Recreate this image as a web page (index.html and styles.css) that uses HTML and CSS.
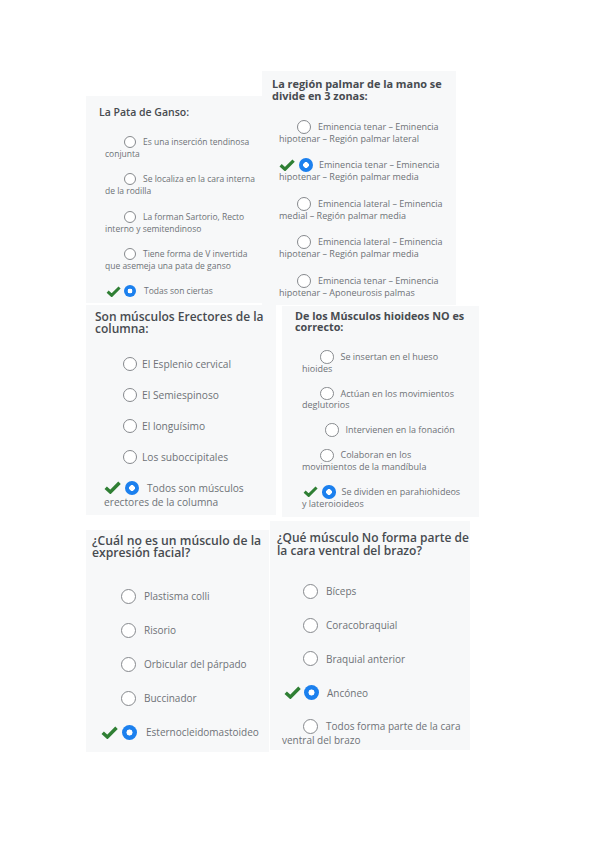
FILE: index.html
```html
<!DOCTYPE html>
<html lang="es">
<head>
<meta charset="utf-8">
<title>Cuestionario de anatomía</title>
<link rel="stylesheet" href="styles.css">
</head>
<body>
<main class="page">
  <div class="row row-1">
    <section class="card q1">
      <h2 class="title">La Pata de Ganso:</h2>
      <div class="opts">
        <p class="opt"><span class="lead"></span><span class="radio"></span>Es una inserción tendinosa<br>conjunta</p>
        <p class="opt"><span class="lead"></span><span class="radio"></span>Se localiza en la cara interna<br>de la rodilla</p>
        <p class="opt"><span class="lead"></span><span class="radio"></span>La forman Sartorio, Recto<br>interno y semitendinoso</p>
        <p class="opt"><span class="lead"></span><span class="radio"></span>Tiene forma de V invertida<br>que asemeja una pata de ganso</p>
        <p class="opt"><span class="lead on"><svg class="check" viewBox="0 0 16 12"><path d="M1.6 6.2 L6 10.2 L14.6 1.6"/></svg></span><span class="radio checked"></span>Todas son ciertas</p>
      </div>
    </section>
    <section class="card q2">
      <h2 class="title">La región palmar de la mano se<br>divide en 3 zonas:</h2>
      <div class="opts">
        <p class="opt"><span class="lead"></span><span class="radio"></span>Eminencia tenar – Eminencia<br>hipotenar – Región palmar lateral</p>
        <p class="opt"><span class="lead on"><svg class="check" viewBox="0 0 16 12"><path d="M1.6 6.2 L6 10.2 L14.6 1.6"/></svg></span><span class="radio checked"></span>Eminencia tenar – Eminencia<br>hipotenar – Región palmar media</p>
        <p class="opt"><span class="lead"></span><span class="radio"></span>Eminencia lateral – Eminencia<br>medial – Región palmar media</p>
        <p class="opt"><span class="lead"></span><span class="radio"></span>Eminencia lateral – Eminencia<br>hipotenar – Región palmar media</p>
        <p class="opt"><span class="lead"></span><span class="radio"></span>Eminencia tenar – Eminencia<br>hipotenar – Aponeurosis palmas</p>
      </div>
    </section>
  </div>

  <div class="row row-2">
    <section class="card q3">
      <h2 class="title">Son músculos Erectores de la<br>columna:</h2>
      <div class="opts">
        <p class="opt"><span class="lead"></span><span class="radio"></span>El Esplenio cervical</p>
        <p class="opt"><span class="lead"></span><span class="radio"></span>El Semiespinoso</p>
        <p class="opt"><span class="lead"></span><span class="radio"></span>El longuísimo</p>
        <p class="opt"><span class="lead"></span><span class="radio"></span>Los suboccipitales</p>
        <p class="opt"><span class="lead on"><svg class="check" viewBox="0 0 16 12"><path d="M1.6 6.2 L6 10.2 L14.6 1.6"/></svg></span><span class="radio checked"></span>Todos son músculos<br>erectores de la columna</p>
      </div>
    </section>
    <section class="card q4">
      <h2 class="title">De los Músculos hioideos NO es<br>correcto:</h2>
      <div class="opts">
        <p class="opt"><span class="lead"></span><span class="radio"></span>Se insertan en el hueso<br>hioides</p>
        <p class="opt"><span class="lead"></span><span class="radio"></span>Actúan en los movimientos<br>deglutorios</p>
        <p class="opt"><span class="lead wide"></span><span class="radio"></span>Intervienen en la fonación</p>
        <p class="opt"><span class="lead"></span><span class="radio"></span>Colaboran en los<br>movimientos de la mandíbula</p>
        <p class="opt"><span class="lead on"><svg class="check" viewBox="0 0 16 12"><path d="M1.6 6.2 L6 10.2 L14.6 1.6"/></svg></span><span class="radio checked"></span>Se dividen en parahiohideos<br>y lateroioideos</p>
      </div>
    </section>
  </div>

  <div class="row row-3">
    <section class="card q5">
      <h2 class="title">¿Cuál no es un músculo de la<br>expresión facial?</h2>
      <div class="opts">
        <p class="opt"><span class="lead"></span><span class="radio"></span>Plastisma colli</p>
        <p class="opt"><span class="lead"></span><span class="radio"></span>Risorio</p>
        <p class="opt"><span class="lead"></span><span class="radio"></span>Orbicular del párpado</p>
        <p class="opt"><span class="lead"></span><span class="radio"></span>Buccinador</p>
        <p class="opt"><span class="lead on"><svg class="check" viewBox="0 0 16 12"><path d="M1.6 6.2 L6 10.2 L14.6 1.6"/></svg></span><span class="radio checked"></span>Esternocleidomastoideo</p>
      </div>
    </section>
    <section class="card q6">
      <h2 class="title">¿Qué músculo No forma parte de<br>la cara ventral del brazo?</h2>
      <div class="opts">
        <p class="opt"><span class="lead"></span><span class="radio"></span>Bíceps</p>
        <p class="opt"><span class="lead"></span><span class="radio"></span>Coracobraquial</p>
        <p class="opt"><span class="lead"></span><span class="radio"></span>Braquial anterior</p>
        <p class="opt"><span class="lead on"><svg class="check" viewBox="0 0 16 12"><path d="M1.6 6.2 L6 10.2 L14.6 1.6"/></svg></span><span class="radio checked"></span>Ancóneo</p>
        <p class="opt"><span class="lead"></span><span class="radio"></span>Todos forma parte de la cara<br>ventral del brazo</p>
      </div>
    </section>
  </div>
</main>
</body>
</html>
```

FILE: styles.css
```css
* { box-sizing: border-box; }

html, body {
  margin: 0;
  padding: 0;
  background: #ffffff;
}

body {
  width: 599px;
  height: 848px;
  overflow: hidden;
  font-family: "Open Sans", "Noto Sans", "DejaVu Sans", sans-serif;
}

.page {
  padding-top: 71px;
}

.row {
  display: flex;
  align-items: flex-start;
  padding-left: 86px;
}

.row-2 { gap: 6px; }
.row-3 { gap: 1px; margin-top: 3.5px; }

.card {
  background: #f7f8f9;
  padding-top: var(--pt);
  padding-bottom: var(--pb);
}

.title {
  margin: 0 0 var(--tg);
  padding-left: var(--tpl);
  font-size: var(--tfs);
  line-height: var(--tlh);
  font-weight: var(--tw, 600);
  color: #474b50;
  white-space: nowrap;
}

.opts {
  padding-left: var(--opl);
}

.opt {
  margin: 0;
  font-size: var(--fs);
  line-height: var(--lh);
  color: #6e7277;
  white-space: nowrap;
}

.opt + .opt {
  margin-top: var(--og);
}

.lead {
  display: inline-flex;
  align-items: center;
  width: var(--lead);
  height: var(--lh);
  vertical-align: top;
}

.lead.on {
  width: var(--leadc);
  padding-left: var(--ckoff, 0px);
}

.lead.wide {
  width: var(--leadw);
}

.check {
  width: var(--ckw);
  height: var(--ckh);
  flex: none;
}

.check path {
  fill: none;
  stroke: #2f7f34;
  stroke-width: 3.3;
  stroke-linejoin: miter;
}

.radio {
  display: inline-block;
  width: var(--rd);
  height: var(--rd);
  margin-top: calc((var(--lh) - var(--rd)) / 2);
  margin-bottom: calc((var(--lh) - var(--rd)) / 2);
  margin-right: var(--rg);
  border: 1.4px solid #86898d;
  border-radius: 50%;
  background: #ffffff;
  vertical-align: top;
}

.radio.checked {
  border: none;
  margin-right: var(--rgc, var(--rg));
  background: radial-gradient(circle, #ffffff 0 26%, #1c80ee 31%);
}

/* individual question cards */
.q1 {
  width: 176px;
  margin-top: 25px;
  --pt: 8.5px; --pb: 6px;
  --tfs: 10.5px; --tlh: 14px; --tpl: 13px; --tg: 17.5px;
  --opl: 19px; --fs: 8.5px; --lh: 12px; --og: 13.25px;
  --rd: 12px; --rg: 7px; --rgc: 8px;
  --lead: 19px; --leadc: 19px; --ckoff: 1px; --ckw: 15px; --ckh: 11px;
}

.q2 {
  width: 194px;
  --pt: 7.2px; --pb: 6px;
  --tfs: 10.9px; --tlh: 12.3px; --tw: 700; --tpl: 10px; --tg: 18.2px;
  --opl: 17px; --fs: 9px; --lh: 12px; --og: 14.5px;
  --rd: 14px; --rg: 7px; --rgc: 6px;
  --lead: 18px; --leadc: 20px; --ckoff: 0px; --ckw: 16px; --ckh: 12px;
}

.q3 {
  width: 190px;
  --pt: 6.3px; --pb: 6px;
  --tfs: 12px; --tlh: 11.5px; --tpl: 9px; --tg: 22.7px;
  --opl: 18px; --fs: 10.2px; --lh: 14px; --og: 17px;
  --rd: 14px; --rg: 5px; --rgc: 8px;
  --lead: 19px; --leadc: 21px; --ckoff: 0px; --ckw: 17px; --ckh: 13px;
}

.q4 {
  width: 197px;
  margin-top: 1px;
  --pt: 5.45px; --pb: 7.75px;
  --tfs: 10.8px; --tlh: 10.7px; --tw: 700; --tpl: 13px; --tg: 18.4px;
  --opl: 20px; --fs: 9px; --lh: 11.6px; --og: 13.4px;
  --rd: 13.5px; --rg: 7px; --rgc: 6px;
  --lead: 18px; --leadw: 23px; --leadc: 20px; --ckoff: 1px; --ckw: 15px; --ckh: 11px;
}

.q5 {
  width: 183px;
  margin-top: 9px;
  --pt: 5.85px; --pb: 12px;
  --tfs: 12.2px; --tlh: 12px; --tpl: 6px; --tg: 29px;
  --opl: 15px; --fs: 10px; --lh: 16px; --og: 18px;
  --rd: 15px; --rg: 8px; --rgc: 9px;
  --lead: 20px; --leadc: 21px; --ckoff: 0px; --ckw: 17px; --ckh: 13px;
}

.q6 {
  width: 200px;
  --pt: 10px; --pb: 3px;
  --tfs: 12px; --tlh: 13.3px; --tpl: 7px; --tg: 27.2px;
  --opl: 12px; --fs: 10px; --lh: 14px; --og: 19.75px;
  --rd: 15px; --rg: 8px; --rgc: 8px;
  --lead: 21px; --leadc: 22px; --ckoff: 2px; --ckw: 17px; --ckh: 13px;
}
```
